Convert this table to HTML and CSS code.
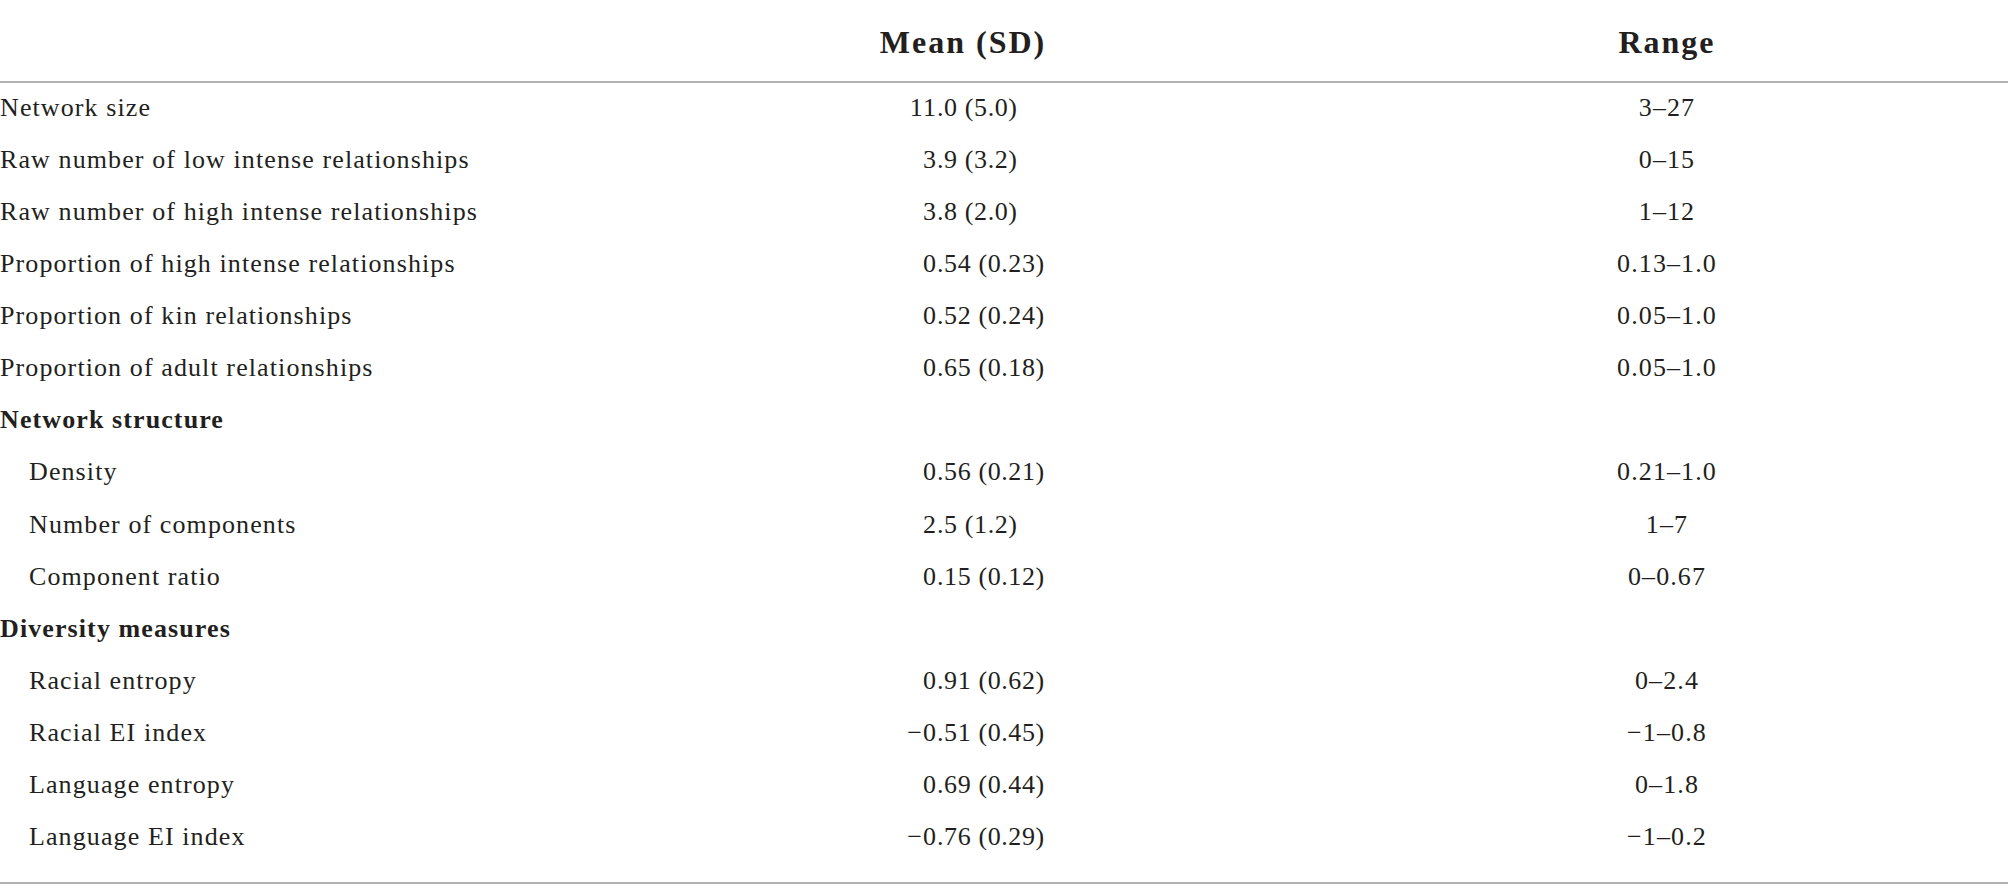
FILE: index.html
```html
<!DOCTYPE html>
<html>
<head>
<meta charset="utf-8">
<link rel="stylesheet" href="styles.css">
</head>
<body>
<table class="stats">
  <colgroup>
    <col class="c-label">
    <col class="c-mean">
    <col class="c-range">
  </colgroup>
  <thead>
    <tr>
      <th class="h-label"></th>
      <th class="h-mean">Mean (SD)</th>
      <th class="h-range">Range</th>
    </tr>
  </thead>
  <tbody>
    <tr><td class="label">Network size</td><td class="mean"><span class="int">11</span><span class="frac">.0 (5.0)</span></td><td class="range">3–27</td></tr>
    <tr><td class="label">Raw number of low intense relationships</td><td class="mean"><span class="int">3</span><span class="frac">.9 (3.2)</span></td><td class="range">0–15</td></tr>
    <tr><td class="label">Raw number of high intense relationships</td><td class="mean"><span class="int">3</span><span class="frac">.8 (2.0)</span></td><td class="range">1–12</td></tr>
    <tr><td class="label">Proportion of high intense relationships</td><td class="mean"><span class="int">0</span><span class="frac">.54 (0.23)</span></td><td class="range">0.13–1.0</td></tr>
    <tr><td class="label">Proportion of kin relationships</td><td class="mean"><span class="int">0</span><span class="frac">.52 (0.24)</span></td><td class="range">0.05–1.0</td></tr>
    <tr><td class="label">Proportion of adult relationships</td><td class="mean"><span class="int">0</span><span class="frac">.65 (0.18)</span></td><td class="range">0.05–1.0</td></tr>
    <tr><td class="label section">Network structure</td><td class="mean"></td><td class="range"></td></tr>
    <tr><td class="label sub">Density</td><td class="mean"><span class="int">0</span><span class="frac">.56 (0.21)</span></td><td class="range">0.21–1.0</td></tr>
    <tr><td class="label sub">Number of components</td><td class="mean"><span class="int">2</span><span class="frac">.5 (1.2)</span></td><td class="range">1–7</td></tr>
    <tr><td class="label sub">Component ratio</td><td class="mean"><span class="int">0</span><span class="frac">.15 (0.12)</span></td><td class="range">0–0.67</td></tr>
    <tr><td class="label section">Diversity measures</td><td class="mean"></td><td class="range"></td></tr>
    <tr><td class="label sub">Racial entropy</td><td class="mean"><span class="int">0</span><span class="frac">.91 (0.62)</span></td><td class="range">0–2.4</td></tr>
    <tr><td class="label sub">Racial EI index</td><td class="mean"><span class="int">−0</span><span class="frac">.51 (0.45)</span></td><td class="range">−1–0.8</td></tr>
    <tr><td class="label sub">Language entropy</td><td class="mean"><span class="int">0</span><span class="frac">.69 (0.44)</span></td><td class="range">0–1.8</td></tr>
    <tr class="last"><td class="label sub">Language EI index</td><td class="mean"><span class="int">−0</span><span class="frac">.76 (0.29)</span></td><td class="range">−1–0.2</td></tr>
  </tbody>
</table>
</body>
</html>
```
FILE: styles.css
```css
html, body {
  margin: 0;
  padding: 0;
  background: #ffffff;
}

body {
  font-family: "Liberation Serif", "Times New Roman", serif;
  color: #231f20;
}

.stats {
  width: 2008px;
  border-collapse: collapse;
  table-layout: fixed;
  border-bottom: 2px solid #b1b1b1;
}

.c-label { width: 600px; }
.c-mean { width: 726px; }
.c-range { width: 682px; }

.stats thead th {
  font-weight: bold;
  font-size: 32px;
  letter-spacing: 2px;
  line-height: 40px;
  padding: 22px 0 19px 0;
  text-align: center;
  border-bottom: 2px solid #b1b1b1;
}

.stats td {
  font-size: 26px;
  letter-spacing: 1.1px;
  line-height: 50.07px;
  padding: 0 0 2px 0;
  white-space: nowrap;
  vertical-align: top;
}

.stats tr.last td {
  padding-bottom: 20px;
}

.label {
  text-align: left;
}

.label.section {
  font-weight: bold;
}

.label.sub {
  padding-left: 29px;
}

.mean {
  text-align: left;
  padding-left: 277px !important;
}

.mean .int {
  display: inline-block;
  width: 60px;
  text-align: right;
}

.mean .frac {
  letter-spacing: 0.6px;
}

.range {
  text-align: center;
}
```
